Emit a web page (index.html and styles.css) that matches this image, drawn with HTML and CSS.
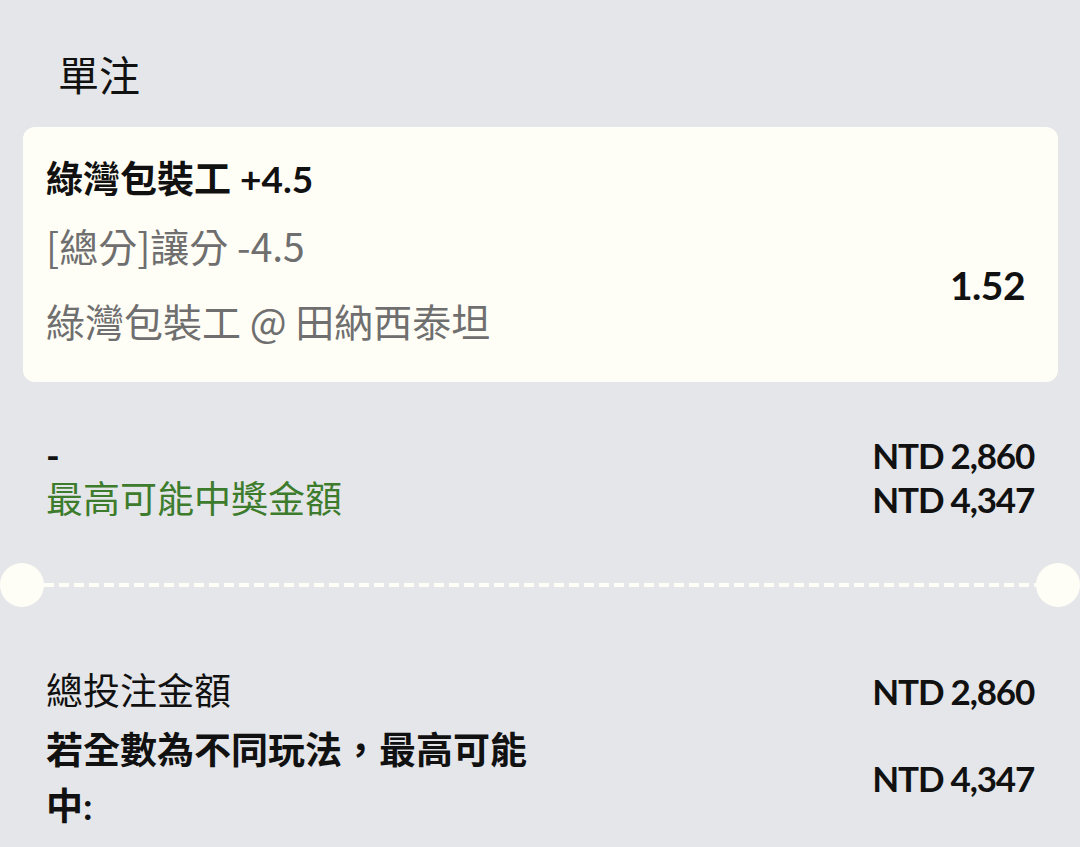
FILE: index.html
```html
<!DOCTYPE html>
<html lang="zh-Hant">
<head>
  <meta charset="UTF-8">
  <title>單注</title>
  <meta name="viewport" content="width=device-width, initial-scale=1.0">
  <link rel="stylesheet" href="styles.css">
</head>
<body>

  <div class="page">
    <h1 class="title">單注</h1>

    <div class="bet-card">
      <div class="bet-pick">綠灣包裝工 +4.5</div>
      <div class="bet-body">
        <div class="bet-info">
          <div class="bet-line">[總分]讓分 -4.5</div>
          <div class="bet-line">綠灣包裝工 @ 田納西泰坦</div>
        </div>
        <div class="bet-odds">1.52</div>
      </div>
    </div>

    <div class="stake">
      <div class="stake-left">
        <div class="stake-dash">-</div>
        <div class="stake-win">最高可能中獎金額</div>
      </div>
      <div class="stake-right">
        <div class="amount">NTD 2,860</div>
        <div class="amount">NTD 4,347</div>
      </div>
    </div>
  </div>

  <div class="divider">
    <span class="notch"></span>
    <span class="dashes"></span>
    <span class="notch"></span>
  </div>

  <div class="page">
    <div class="total-row">
      <div class="total-label">總投注金額</div>
      <div class="amount">NTD 2,860</div>
    </div>
    <div class="total-row max-row">
      <div class="total-label strong">若全數為不同玩法，最高可能中:</div>
      <div class="amount">NTD 4,347</div>
    </div>
  </div>

</body>
</html>
```

FILE: styles.css
```css
body {
  margin: 0;
  font-family: Lato, "Noto Sans CJK TC", sans-serif;
  background-color: #e5e6e9;
  color: #111;
}

.page {
  padding: 0 46px;
}

.title {
  margin: 0;
  padding: 48px 0 0 12px;
  font-size: 41px;
  font-weight: 400;
  line-height: 56px;
}

.bet-card {
  margin: 23px -24px 0 -23px;
  padding: 28px 33px 24px 23px;
  background: #fffef6;
  border-radius: 12px;
}

.bet-pick {
  font-size: 37px;
  font-weight: 700;
  line-height: 48px;
  margin-bottom: 5px;
}

.bet-body {
  display: flex;
  justify-content: space-between;
  align-items: center;
}

/* the grey lines use the system CJK face for latin glyphs too */
.bet-line {
  font-family: "Noto Sans CJK TC", sans-serif;
  font-size: 39px;
  line-height: 75px;
  color: #6f6f6f;
}

.bet-odds {
  font-size: 39px;
  font-weight: 700;
  letter-spacing: -0.5px;
  padding-top: 4px;
}

.stake {
  display: flex;
  justify-content: space-between;
  margin-top: 51px;
  line-height: 44px;
  font-size: 37px;
}

.stake-dash {
  font-weight: 700;
}

.stake-win {
  color: #3d7c2c;
}

.stake-right {
  text-align: right;
}

.amount {
  font-size: 35px;
  font-weight: 700;
  letter-spacing: -1.2px;
  text-align: right;
}

.divider {
  display: flex;
  align-items: center;
  margin-top: 42px;
}

.notch {
  width: 44px;
  height: 44px;
  border-radius: 50%;
  background: #fffef6;
  flex-shrink: 0;
}

.dashes {
  flex-grow: 1;
  height: 4px;
  background: repeating-linear-gradient(90deg, #fffef6 0 10px, transparent 10px 15px);
}

.total-row {
  display: flex;
  justify-content: space-between;
  align-items: center;
  font-size: 37px;
  line-height: 44px;
}

.total-row:first-child {
  margin-top: 62px;
}

.max-row {
  margin-top: 9px;
  line-height: 56px;
}

.total-label {
  max-width: 50%;
}

.strong {
  font-weight: 700;
}
```
